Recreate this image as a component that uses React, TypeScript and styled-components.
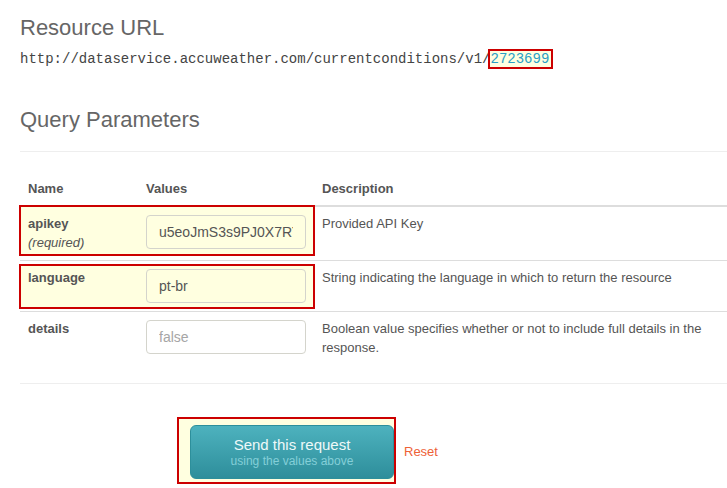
import React from "react";
import styled, { createGlobalStyle } from "styled-components";

const Global = createGlobalStyle`
  html, body { margin: 0; padding: 0; overflow: hidden; background: #fff; }
  body {
    font-family: "Liberation Sans", Arial, sans-serif;
    font-size: 13px;
    line-height: 1.428571;
    color: #555;
  }
  * { box-sizing: border-box; }
`;

const Page = styled.div`
  width: 750px;
  padding-left: 20px;
`;

const Heading = styled.h3<{ $top: number; $bottom: number }>`
  font-family: "Liberation Sans", Arial, sans-serif;
  font-size: 22px;
  font-weight: normal;
  line-height: 1.1;
  color: #666;
  margin: ${(p) => p.$top}px 0 ${(p) => p.$bottom}px;
`;

const UrlLine = styled.div`
  font-family: "Liberation Mono", "Courier New", monospace;
  font-size: 14px;
  line-height: 20px;
  color: #444;
  white-space: nowrap;
`;

const UrlParam = styled.span`
  color: #2a9fc6;
  background: #ffffe0;
  outline: 2px solid #cc0000;
  padding-right: 2px;
`;

const Rule = styled.div<{ $top: number; $bottom: number }>`
  border-top: 1px solid #eee;
  margin: ${(p) => p.$top}px 0 ${(p) => p.$bottom}px;
`;

const ParamTable = styled.div`
  width: 100%;
`;

const HeaderRow = styled.div`
  display: flex;
  border-bottom: 2px solid #ddd;
`;

const HeadCell = styled.div<{ $w?: number }>`
  ${(p) => (p.$w ? `width: ${p.$w}px; flex: none;` : "flex: 1;")}
  padding: 8px 8px 6px;
  font-weight: bold;
  color: #555;
`;

const Row = styled.div<{ $first?: boolean }>`
  display: flex;
  border-top: ${(p) => (p.$first ? "none" : "1px solid #ddd")};
`;

const Group = styled.div<{ $hl?: boolean; $hlTop: number; $hlBottom: number }>`
  position: relative;
  isolation: isolate;
  display: flex;
  width: 294px;
  flex: none;
  &::before {
    content: "";
    display: ${(p) => (p.$hl ? "block" : "none")};
    position: absolute;
    left: -1px;
    right: -1px;
    top: ${(p) => p.$hlTop}px;
    bottom: ${(p) => p.$hlBottom}px;
    background: #ffffe0;
    border: 2px solid #cc0000;
    z-index: -1;
  }
`;

const NameCell = styled.div`
  width: 118px;
  padding: 8px;
  color: #555;
`;

const ParamName = styled.div`
  font-weight: bold;
`;

const Required = styled.div`
  font-style: italic;
`;

const ValueCell = styled.div`
  width: 176px;
  padding: 8px;
`;

const Input = styled.input`
  display: block;
  width: 160px;
  height: 34px;
  padding: 6px 12px;
  font-family: "Liberation Sans", Arial, sans-serif;
  font-size: 14px;
  color: #555;
  background: transparent;
  border: 1px solid #d4d4cc;
  border-radius: 4px;
  outline: none;
  &::placeholder { color: #a6a6a6; }
`;

const DescCell = styled.div`
  flex: 1;
  padding: 8px;
  color: #555;
`;

const Actions = styled.div`
  display: flex;
  align-items: center;
  padding-left: 157px;
`;

const ButtonFrame = styled.div`
  background: #ffffe0;
  border: 2px solid #cc0000;
  padding: 6px 0 3px 11px;
`;

const SendButton = styled.button`
  display: block;
  width: 204px;
  height: 54px;
  padding: 1px 0 0;
  border: 1px solid #2d8f9b;
  border-radius: 6px;
  background: linear-gradient(to bottom, #4db2be 0%, #2e8e9b 100%);
  font-family: "Liberation Sans", Arial, sans-serif;
  cursor: pointer;
  text-align: center;
`;

const SendMain = styled.span`
  display: block;
  font-size: 15px;
  line-height: 18px;
  color: #eef9f9;
`;

const SendSub = styled.span`
  display: block;
  font-size: 12px;
  line-height: 15px;
  color: #84cfd8;
`;

const ResetLink = styled.a`
  margin-left: 8px;
  margin-top: 4px;
  color: #ee6137;
  font-size: 13px;
  text-decoration: none;
`;

type Param = {
  name: string;
  required?: boolean;
  value?: string;
  placeholder?: string;
  desc: string;
  hl?: boolean;
  hlTop: number;
  hlBottom: number;
};

const params: Param[] = [
  {
    name: "apikey",
    required: true,
    value: "u5eoJmS3s9PJ0X7RYzQK9cb3Mp",
    desc: "Provided API Key",
    hl: true,
    hlTop: -2,
    hlBottom: 4,
  },
  {
    name: "language",
    value: "pt-br",
    desc: "String indicating the language in which to return the resource",
    hl: true,
    hlTop: 3,
    hlBottom: 2,
  },
  {
    name: "details",
    placeholder: "false",
    desc: "Boolean value specifies whether or not to include full details in the response.",
    hlTop: 0,
    hlBottom: 0,
  },
];

export default function App() {
  return (
    <>
      <Global />
      <Page>
        <Heading $top={16} $bottom={9}>Resource URL</Heading>
        <UrlLine>
          http://dataservice.accuweather.com/currentconditions/v1/
          <UrlParam>2723699</UrlParam>
        </UrlLine>
        <Heading $top={39} $bottom={0}>Query Parameters</Heading>
        <Rule $top={19} $bottom={20} />
        <ParamTable>
          <HeaderRow>
            <HeadCell $w={118}>Name</HeadCell>
            <HeadCell $w={176}>Values</HeadCell>
            <HeadCell>Description</HeadCell>
          </HeaderRow>
          {params.map((p, i) => (
            <Row key={p.name} $first={i === 0}>
              <Group $hl={p.hl} $hlTop={p.hlTop} $hlBottom={p.hlBottom}>
                <NameCell>
                  <ParamName>{p.name}</ParamName>
                  {p.required && <Required>(required)</Required>}
                </NameCell>
                <ValueCell>
                  <Input
                    type="text"
                    defaultValue={p.value}
                    placeholder={p.placeholder}
                  />
                </ValueCell>
              </Group>
              <DescCell>{p.desc}</DescCell>
            </Row>
          ))}
        </ParamTable>
        <Rule $top={18} $bottom={33} />
        <Actions>
          <ButtonFrame>
            <SendButton type="button">
              <SendMain>Send this request</SendMain>
              <SendSub>using the values above</SendSub>
            </SendButton>
          </ButtonFrame>
          <ResetLink href="#">Reset</ResetLink>
        </Actions>
      </Page>
    </>
  );
}
